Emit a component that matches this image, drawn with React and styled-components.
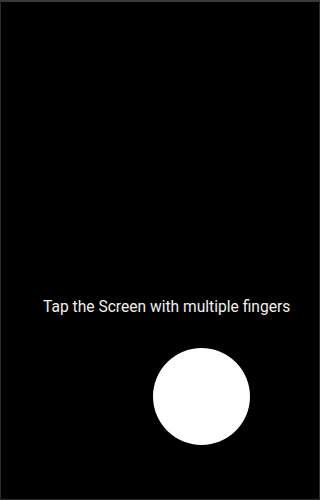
import React from "react";
import styled, { createGlobalStyle } from "styled-components";

const Global = createGlobalStyle`
  html, body { margin: 0; padding: 0; background: #000; }
`;

const Screen = styled.div`
  box-sizing: border-box;
  width: 320px;
  height: 500px;
  background: #000;
  border: 1px solid #2c2c2c;
  border-top: 2px solid #3a3a3a;
  display: flex;
  flex-direction: column;
  padding-top: 295px;
`;

const Prompt = styled.div`
  font-family: Roboto, "Liberation Sans", sans-serif;
  font-size: 15.6px;
  line-height: 20px;
  color: #f0f0f0;
  padding-left: 42px;
  white-space: nowrap;
`;

const Touch = styled.div`
  width: 97px;
  height: 97px;
  border-radius: 50%;
  background: #fff;
  margin-top: 31px;
  margin-left: 152px;
`;

export default function App() {
  return (
    <>
      <Global />
      <Screen>
        <Prompt>Tap the Screen with multiple fingers</Prompt>
        <Touch />
      </Screen>
    </>
  );
}
